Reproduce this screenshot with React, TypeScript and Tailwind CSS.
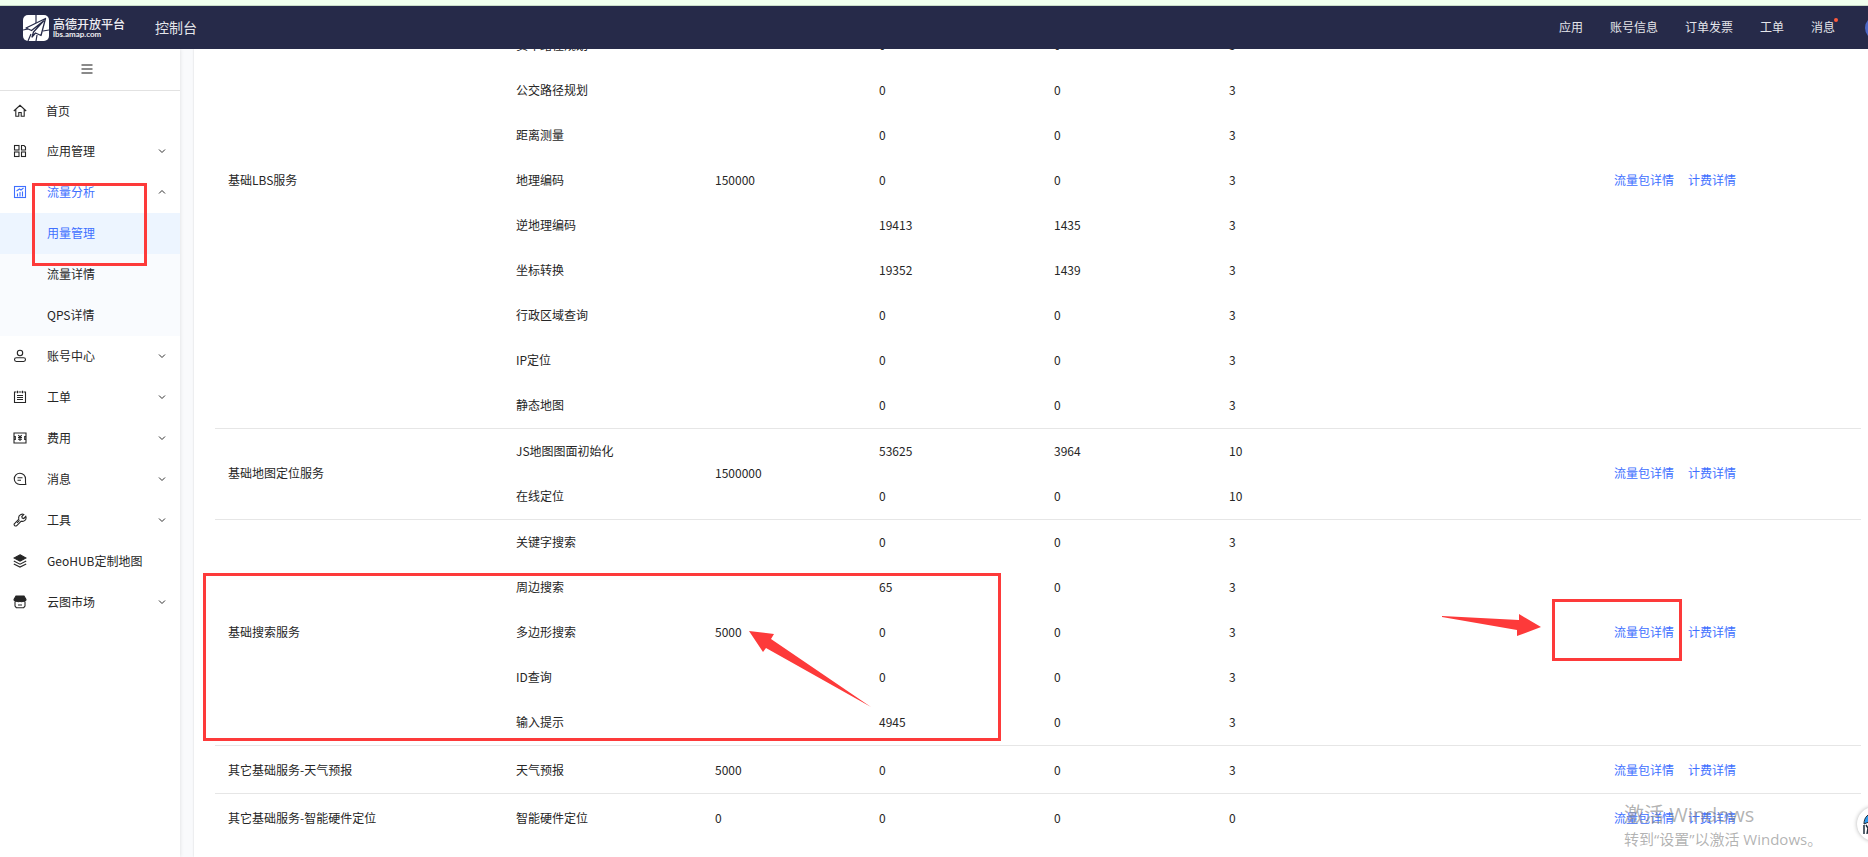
import type { ReactNode } from "react";
import { clsx } from "clsx";

type ServiceRow = {
  name: string;
  used: number;
  average: number;
  qps: number;
};

type ServiceGroup = {
  title: string;
  quota: number;
  rows: ServiceRow[];
};

type MenuEntry = {
  label: string;
  icon: ReactNode;
  state?: "closed" | "open";
  children?: string[];
};

const HEADER_LINKS = ["应用", "账号信息", "订单发票", "工单"];

const GROUPS: ServiceGroup[] = [
  {
    title: "基础LBS服务",
    quota: 150000,
    rows: [
      { name: "驾车路径规划", used: 0, average: 0, qps: 3 },
      { name: "步行路径规划", used: 0, average: 0, qps: 3 },
      { name: "货车路径规划", used: 0, average: 0, qps: 3 },
      { name: "公交路径规划", used: 0, average: 0, qps: 3 },
      { name: "距离测量", used: 0, average: 0, qps: 3 },
      { name: "地理编码", used: 0, average: 0, qps: 3 },
      { name: "逆地理编码", used: 19413, average: 1435, qps: 3 },
      { name: "坐标转换", used: 19352, average: 1439, qps: 3 },
      { name: "行政区域查询", used: 0, average: 0, qps: 3 },
      { name: "IP定位", used: 0, average: 0, qps: 3 },
      { name: "静态地图", used: 0, average: 0, qps: 3 },
    ],
  },
  {
    title: "基础地图定位服务",
    quota: 1500000,
    rows: [
      { name: "JS地图图面初始化", used: 53625, average: 3964, qps: 10 },
      { name: "在线定位", used: 0, average: 0, qps: 10 },
    ],
  },
  {
    title: "基础搜索服务",
    quota: 5000,
    rows: [
      { name: "关键字搜索", used: 0, average: 0, qps: 3 },
      { name: "周边搜索", used: 65, average: 0, qps: 3 },
      { name: "多边形搜索", used: 0, average: 0, qps: 3 },
      { name: "ID查询", used: 0, average: 0, qps: 3 },
      { name: "输入提示", used: 4945, average: 0, qps: 3 },
    ],
  },
  {
    title: "其它基础服务-天气预报",
    quota: 5000,
    rows: [{ name: "天气预报", used: 0, average: 0, qps: 3 }],
  },
  {
    title: "其它基础服务-智能硬件定位",
    quota: 0,
    rows: [{ name: "智能硬件定位", used: 0, average: 0, qps: 0 }],
  },
];

function Icon({ children }: { children: ReactNode }) {
  return (
    <svg
      viewBox="0 0 14 14"
      className="size-[14px] shrink-0"
      fill="none"
      stroke="currentColor"
      strokeWidth="1.1"
      aria-hidden="true"
    >
      {children}
    </svg>
  );
}

const MENU: MenuEntry[] = [
  {
    label: "应用管理",
    state: "closed",
    icon: (
      <Icon>
        <rect x="1.5" y="1.5" width="4.5" height="4.5" />
        <path d="M8.5 1.5h2.5l1.5 1.5v3h-4z" />
        <rect x="1.5" y="8" width="4.5" height="4.5" />
        <rect x="8.5" y="8" width="4" height="4.5" />
      </Icon>
    ),
  },
  {
    label: "流量分析",
    state: "open",
    children: ["用量管理", "流量详情", "QPS详情"],
    icon: (
      <Icon>
        <rect x="1.5" y="1.5" width="11" height="11" />
        <path d="M4.5 8.5v3M7 7v4.5M9.5 6.5v5M3.5 6l3-2 1.5 1 2.5-2" />
      </Icon>
    ),
  },
  {
    label: "账号中心",
    state: "closed",
    icon: (
      <Icon>
        <circle cx="7" cy="4" r="2.7" />
        <rect x="1.5" y="8.7" width="11" height="3.8" rx="1.9" />
      </Icon>
    ),
  },
  {
    label: "工单",
    state: "closed",
    icon: (
      <Icon>
        <path d="M3.5 2h-2v10.5h11V2h-2M5.5 2h3M4.500 .8v2.400M9.500 .8v2.400" />
        <path d="M4 5.500h6M4 7.500h6M4 9.500h6" />
      </Icon>
    ),
  },
  {
    label: "费用",
    state: "closed",
    icon: (
      <Icon>
        <path d="M1 2h12v10H1zM1 5.500h1.300v3H1M13 5.500h-1.300v3H13" />
        <path d="M5.300 4.200L7 6l1.700-1.800M5 6.500h4M5 8.300h4M7 6v4" />
      </Icon>
    ),
  },
  {
    label: "消息",
    state: "closed",
    icon: (
      <Icon>
        <path d="M12.800 12.500H7A5.600 5.600 0 1 1 12.500 7v3.500zM4.500 5.700h5M4.500 8.300h3.500" />
      </Icon>
    ),
  },
  {
    label: "工具",
    state: "closed",
    icon: (
      <Icon>
        <path d="M1.300 10.800l4.600-4.600c-.6-2 .2-4 2-4.800 1-.4 2-.4 2.900 0L8.800 3.500l.4 1.500 1.600.5 2-2.100c.6 1.700-.1 3.600-1.600 4.500-1 .6-2 .6-3 .3l-4.600 4.600c-1.500.8-3-.6-2.300-2z" />
        <path d="M4 9.800l2.500-2.500" />
      </Icon>
    ),
  },
  {
    label: "GeoHUB定制地图",
    icon: (
      <Icon>
        <path d="M7 .8L13 4 7 7.200 1 4z" fill="currentColor" />
        <path d="M.8 7L7 10.200 13.200 7M.8 9.900L7 13.100l6.200-3.200" />
      </Icon>
    ),
  },
  {
    label: "云图市场",
    state: "closed",
    icon: (
      <Icon>
        <path
          d="M3 1h8l2 3.500c0 2-2.500 2.500-3 1.200-.5 1.300-2.500 1.300-3 0-.5 1.300-2.500 1.300-3 0-.5 1.300-3 .8-3-1.200z"
          fill="currentColor"
        />
        <path d="M2 7v4l1.300 1.700h7.400L12 11V7M5 10h4" />
      </Icon>
    ),
  },
];

function Chevron({ up }: { up: boolean }) {
  return (
    <svg
      viewBox="0 0 8 8"
      className={clsx("size-2", up && "rotate-180")}
      fill="none"
      stroke="#303030"
      aria-hidden="true"
    >
      <path d="M1 2.500L4 5.500l3-3" />
    </svg>
  );
}

function Logo() {
  return (
    <a href="#" className="ml-[23px] flex items-center gap-1 text-[#eeeef2]">
      <svg viewBox="0 0 26 26" className="size-[26px]" aria-hidden="true">
        <rect width="26" height="26" rx="5" fill="#fff" />
        <path
          d="M13 0v8M0 15l5-1M14 20l-1 6M20 16l6-1M5 26l3-7"
          stroke="#262a49"
          strokeWidth="1.2"
        />
        <path
          d="M22.500 3.500L3 13l5.500 2.500L20.500 6 10.500 17 9 22l3.500-4 5.500 2.500z"
          fill="#fff"
          stroke="#262a49"
          strokeWidth="1.3"
          strokeLinejoin="round"
        />
      </svg>
      <span className="flex flex-col">
        <span className="text-[12px] leading-[12px] font-medium">高德开放平台</span>
        <span className="font-['Lato'] text-[8px] leading-[8px] font-bold">
          lbs.amap.com
        </span>
      </span>
    </a>
  );
}

function Header() {
  return (
    <header className="z-10 flex h-[43px] shrink-0 items-center overflow-hidden bg-[#262a49] text-[#e4e5ea]">
      <Logo />
      <a href="#" className="ml-[30px] text-[14px]">
        控制台
      </a>
      <nav className="ml-auto flex items-center gap-[27px] pb-0.5 text-[12px]">
        {HEADER_LINKS.map((label) => (
          <a key={label} href="#">
            {label}
          </a>
        ))}
        <a href="#" className="relative">
          消息
          <span className="absolute top-0 -right-[3px] size-1 rounded-full bg-[#ff5a3c]" />
        </a>
      </nav>
      <span className="-mr-[21px] ml-[30px] size-6 shrink-0 rounded-full bg-[#4a66c4]" />
    </header>
  );
}

function Sidebar() {
  return (
    <aside className="relative w-[180px] shrink-0 bg-white shadow-[0_0_4px_rgba(0,0,0,0.12)]">
      <div className="flex h-[42px] items-center justify-center border-b border-[#e2e2e2] pr-[7px] pb-0.5">
        <button type="button" aria-label="收起菜单" className="text-[#8a8a8a]">
          <svg viewBox="0 0 12 12" className="size-3" stroke="currentColor" strokeWidth="2">
            <path d="M0.500 2H11.500M0.500 6H11.500M0.500 10H11.500" />
          </svg>
        </button>
      </div>
      <ul className="text-[12px] text-[#262626]">
        <li>
          <a href="#" className="flex h-10 items-center pl-[13px]">
            <Icon>
              <path d="M.8 7L7 1.300 13.200 7M2.800 5.500v6.700h3V8.500h2.400v3.700h3V5.500" />
            </Icon>
            <span className="ml-[19px]">首页</span>
          </a>
        </li>
        {MENU.map((entry) => (
          <li key={entry.label}>
            <button
              type="button"
              className={clsx(
                "flex h-[41px] w-full items-center pr-[14px] pb-0.5 pl-[13px]",
                entry.state === "open" && "text-[#4070ff]"
              )}
            >
              {entry.icon}
              <span className="mr-auto ml-5">{entry.label}</span>
              {entry.state && <Chevron up={entry.state === "open"} />}
            </button>
            {entry.children && (
              <ul className="bg-[#f9fbfe]">
                {entry.children.map((child, index) => (
                  <li key={child}>
                    <a
                      href="#"
                      className={clsx(
                        "flex h-[41px] items-center pb-0.5 pl-[47px]",
                        index === 0 && "bg-[#edf5ff] text-[#4070ff]"
                      )}
                    >
                      {child}
                    </a>
                  </li>
                ))}
              </ul>
            )}
          </li>
        ))}
      </ul>
      <div className="pointer-events-none absolute top-[134px] left-8 h-[83px] w-[115px] border-3 border-[#fd3a3a]" />
    </aside>
  );
}

function GroupRows({ group, last }: { group: ServiceGroup; last: boolean }) {
  const count = group.rows.length;
  const spanCell = clsx("px-[13px]", count > 1 && "pb-0.5", !last && "border-b border-[#e6e6e6]");

  return (
    <tbody>
      {group.rows.map((row, index) => {
        const endOfGroup = index === count - 1;
        const cell = clsx(
          "px-[13px]",
          count > 1 && "pb-0.5",
          endOfGroup && !last && "border-b border-[#e6e6e6]"
        );

        return (
          <tr
            key={row.name}
            className={clsx(
              count === 1 && "h-12",
              count > 1 && (endOfGroup ? "h-[46px]" : "h-[45px]")
            )}
          >
            {index === 0 && (
              <td rowSpan={count} className={spanCell}>
                {group.title}
              </td>
            )}
            <td className={cell}>{row.name}</td>
            {index === 0 && (
              <td rowSpan={count} className={spanCell}>
                {group.quota}
              </td>
            )}
            <td className={cell}>{row.used}</td>
            <td className={cell}>{row.average}</td>
            <td className={cell}>{row.qps}</td>
            {index === 0 && (
              <td rowSpan={count} className={clsx(spanCell, "text-[#4070ff]")}>
                <a href="#">流量包详情</a>
                <a href="#" className="ml-[14px]">
                  计费详情
                </a>
              </td>
            )}
          </tr>
        );
      })}
    </tbody>
  );
}

function UsageTable() {
  return (
    <table className="w-full table-fixed border-separate border-spacing-0 text-left text-[12px] text-[#262626]">
      <colgroup>
        <col className="w-[288px]" />
        <col className="w-[199px]" />
        <col className="w-[164px]" />
        <col className="w-[175px]" />
        <col className="w-[175px]" />
        <col className="w-[385px]" />
        <col />
      </colgroup>
      {GROUPS.map((group, index) => (
        <GroupRows key={group.title} group={group} last={index === GROUPS.length - 1} />
      ))}
    </table>
  );
}

function Annotations() {
  return (
    <div className="pointer-events-none absolute inset-0">
      <div className="absolute top-[524px] left-[9px] h-[168px] w-[798px] border-3 border-[#fd3a3a]" />
      <div className="absolute top-[550px] left-[1358px] h-[62px] w-[130px] border-3 border-[#fd3a3a]" />
      <svg
        viewBox="0 0 122 76"
        className="absolute top-[582px] left-[555px] h-[76px] w-[122px]"
        fill="#fd3a3a"
      >
        <path d="M0 0L25 3L22 8L122 76L17 17L14 21Z" />
      </svg>
      <svg
        viewBox="0 0 99 22"
        className="absolute top-[565px] left-[1248px] h-[22px] w-[99px]"
        fill="#fd3a3a"
      >
        <path d="M0 2L77 6V0L99 13L75 22V16L0 3Z" />
      </svg>
    </div>
  );
}

export default function App() {
  return (
    <div className="flex h-screen flex-col overflow-hidden bg-[#f9fafc] font-['Noto_Sans_CJK_SC',sans-serif]">
      <div className="h-[6px] shrink-0 border-b border-[#c9dcc8] bg-[#f0ffee]" />
      <Header />
      <div className="flex min-h-0 flex-1">
        <Sidebar />
        <main className="relative ml-[14px] min-w-0 flex-1 overflow-hidden bg-white pr-[7px] pl-[21px] shadow-[0_0_2px_rgba(0,0,0,0.15)]">
          {/* the list is scrolled part of the way down its first group */}
          <div className="-mt-[116px]">
            <UsageTable />
          </div>
          <Annotations />
          <div className="pointer-events-none absolute right-[50px] bottom-[6px] w-[194px] font-['Open_Sans','Noto_Sans_CJK_SC',sans-serif] whitespace-nowrap text-[#808080]/60">
            <p className="text-[20px] leading-6">激活 Windows</p>
            <p className="text-[15px] leading-6">转到“设置”以激活 Windows。</p>
          </div>
          <button
            type="button"
            aria-label="在线客服"
            className="absolute -right-[23px] bottom-4 size-[34px] overflow-hidden rounded-full bg-white shadow-[0_0_4px_rgba(0,0,0,0.3)]"
          >
            <svg viewBox="0 0 34 34" className="size-[34px]">
              <path d="M7 17C7 10 11 6 19 6v9c-4-1-8 0-12 2z" fill="#2f9bf0" stroke="#1c2b3a" />
              <path d="M7 18v9M9 18l2 3-1 6" fill="none" stroke="#1c2b3a" strokeWidth="1.5" />
            </svg>
          </button>
        </main>
      </div>
    </div>
  );
}
